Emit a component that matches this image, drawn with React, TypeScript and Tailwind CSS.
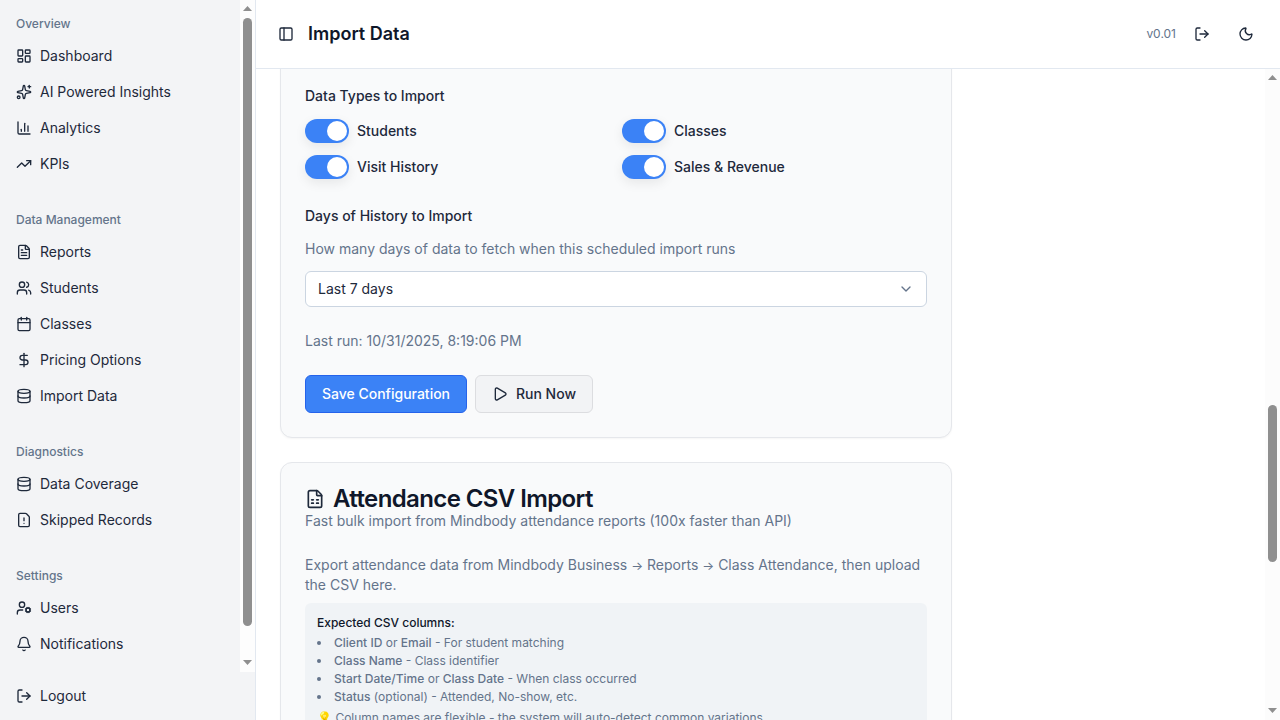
import React, { useEffect, useRef } from 'react';
import {
  LayoutDashboard,
  Sparkles,
  ChartColumn,
  TrendingUp,
  FileText,
  Users,
  Calendar,
  DollarSign,
  Database,
  FileWarning,
  UserCog,
  Bell,
  LogOut,
  PanelLeft,
  Moon,
  Play,
  ChevronDown,
  FileSpreadsheet,
} from 'lucide-react';

const sections = [
  {
    title: 'Overview',
    items: [
      { label: 'Dashboard', icon: LayoutDashboard },
      { label: 'AI Powered Insights', icon: Sparkles },
      { label: 'Analytics', icon: ChartColumn },
      { label: 'KPIs', icon: TrendingUp },
    ],
  },
  {
    title: 'Data Management',
    items: [
      { label: 'Reports', icon: FileText },
      { label: 'Students', icon: Users },
      { label: 'Classes', icon: Calendar },
      { label: 'Pricing Options', icon: DollarSign },
      { label: 'Import Data', icon: Database },
    ],
  },
  {
    title: 'Diagnostics',
    items: [
      { label: 'Data Coverage', icon: Database },
      { label: 'Skipped Records', icon: FileWarning },
    ],
  },
  {
    title: 'Settings',
    items: [
      { label: 'Users', icon: UserCog },
      { label: 'Notifications', icon: Bell },
    ],
  },
];

const Toggle = ({ label }: { label: string }) => (
  <div className="flex items-center gap-2">
    <div className="flex h-6 w-11 items-center justify-end rounded-full bg-[#3b82f6] px-0.5 shadow-[0_4px_12px_rgba(0,0,0,0.08)]">
      <div className="h-5 w-5 rounded-full bg-white" />
    </div>
    <span className="text-sm font-medium text-[#1e293b]">{label}</span>
  </div>
);

const ScrollArrow = ({ down }: { down?: boolean }) => (
  <svg width="9" height="5" viewBox="0 0 9 5" className="fill-[#8f8f8f]">
    <polygon points={down ? '0,0 9,0 4.5,5' : '0,5 9,5 4.5,0'} />
  </svg>
);

const Sidebar = () => (
  <aside className="flex h-full w-64 shrink-0 flex-col border-r border-[#e2e8f0] bg-[#f3f4f6]">
    <div className="relative flex-1 overflow-hidden">
      <nav className="pt-4">
        {sections.map((s, i) => (
          <div key={s.title} className={i > 0 ? 'mt-[30px]' : ''}>
            <div className="mb-1.5 px-4 text-xs leading-4 font-medium text-[#64748b]">{s.title}</div>
            {s.items.map((item) => (
              <div key={item.label} className="flex h-9 items-center gap-2 px-4 text-sm text-[#1e293b]">
                <item.icon size={16} />
                <span>{item.label}</span>
              </div>
            ))}
          </div>
        ))}
      </nav>
      <div className="absolute inset-y-0 right-0 flex w-[15px] flex-col items-center bg-[#fdfdfd] pt-[6px]">
        <ScrollArrow />
        <div className="mt-[7px] h-[608px] w-[9px] rounded-full bg-[#8f8f8f]" />
        <div className="mt-[34px]">
          <ScrollArrow down />
        </div>
      </div>
    </div>
    <div className="flex h-12 shrink-0 items-center gap-2 px-4 text-sm text-[#1e293b]">
      <LogOut size={16} />
      <span>Logout</span>
    </div>
  </aside>
);

const Header = () => (
  <header className="flex h-[69px] shrink-0 items-center border-b border-[#e2e8f0] bg-white pr-4 pl-[22px]">
    <PanelLeft size={16} className="text-[#1e293b]" />
    <h1 className="ml-3.5 text-lg font-semibold text-[#0f172a]">Import Data</h1>
    <div className="ml-auto flex items-center">
      <span className="text-xs text-[#64748b]">v0.01</span>
      <div className="ml-2 flex h-9 w-9 items-center justify-center text-[#1e293b]">
        <LogOut size={16} />
      </div>
      <div className="ml-2 flex h-9 w-9 items-center justify-center text-[#1e293b]">
        <Moon size={16} />
      </div>
    </div>
  </header>
);

const App = () => {
  const scroller = useRef<HTMLElement>(null);

  useEffect(() => {
    // the page is photographed scrolled about halfway down
    if (scroller.current) scroller.current.scrollTop = 1331;
  }, []);

  return (
    <div className="flex h-screen w-full overflow-hidden bg-white font-['Inter',sans-serif]">
      <Sidebar />
      <div className="flex min-w-0 flex-1 flex-col">
        <Header />
        <div className="relative min-h-0 flex-1">
          <main ref={scroller} className="h-full overflow-hidden px-6">
            <div className="max-w-2xl">
              {/* Scheduled import card: only its lower half is in view */}
              <section className="rounded-xl border border-[#e5e7eb] bg-[#f9fafb] px-6 pb-6 shadow-[0_1px_2px_rgba(0,0,0,0.04)]">
                <div className="h-[1347px]" />
                <h3 className="text-sm leading-5 font-medium text-[#1e293b]">Data Types to Import</h3>
                <div className="mt-[13px] grid grid-cols-2 gap-3">
                  <Toggle label="Students" />
                  <Toggle label="Classes" />
                  <Toggle label="Visit History" />
                  <Toggle label="Sales & Revenue" />
                </div>
                <h3 className="mt-[27px] text-sm leading-5 font-medium text-[#1e293b]">Days of History to Import</h3>
                <p className="mt-[13px] text-sm leading-5 text-[#64748b]">
                  How many days of data to fetch when this scheduled import runs
                </p>
                <div className="mt-3 flex h-9 items-center justify-between rounded-md border border-[#cbd5e1] bg-white px-3 text-sm text-[#1e293b]">
                  <span>Last 7 days</span>
                  <ChevronDown size={16} className="text-[#64748b]" />
                </div>
                <p className="mt-6 text-sm leading-5 text-[#64748b]">Last run: 10/31/2025, 8:19:06 PM</p>
                <div className="mt-6 flex gap-2">
                  <button className="h-[38px] w-[162px] rounded-md border border-[#2563eb] bg-[#3b82f6] text-sm font-medium text-white">
                    Save Configuration
                  </button>
                  <button className="flex h-[38px] w-[118px] items-center justify-center gap-2 rounded-md border border-[#dcdde0] bg-[#f2f3f5] text-sm font-medium text-[#1e293b]">
                    <Play size={16} />
                    Run Now
                  </button>
                </div>
              </section>

              <section className="mt-6 h-[1000px] rounded-xl border border-[#e5e7eb] bg-[#f9fafb] px-6 pt-6 shadow-[0_1px_2px_rgba(0,0,0,0.04)]">
                <h2 className="flex items-center gap-2 text-2xl leading-6 font-semibold tracking-tight text-[#0f172a]">
                  <FileSpreadsheet size={20} className="text-[#1e293b]" />
                  Attendance CSV Import
                </h2>
                <p className="text-sm leading-5 text-[#64748b]">Fast bulk import from Mindbody attendance reports (100x faster than API)</p>
                <p className="mt-6 text-sm leading-5 text-[#64748b]">
                  Export attendance data from Mindbody Business <span className="text-[12.5px] leading-none">→</span> Reports <span className="text-[12.5px] leading-none">→</span> Class Attendance, then upload the CSV here.
                </p>
                <div className="mt-2 rounded-md bg-[#f0f3f6] p-3 text-xs leading-[18px] text-[#64748b]">
                  <p className="mb-[3px] leading-4 font-medium text-[#0f172a]">Expected CSV columns:</p>
                  <ul className="list-inside list-disc">
                    <li><strong className="font-medium">Client ID</strong> or <strong className="font-medium">Email</strong> - For student matching</li>
                    <li><strong className="font-medium">Class Name</strong> - Class identifier</li>
                    <li><strong className="font-medium">Start Date/Time</strong> or <strong className="font-medium">Class Date</strong> - When class occurred</li>
                    <li><strong className="font-medium">Status</strong> (optional) - Attended, No-show, etc.</li>
                  </ul>
                  <p className="mt-[3px]">💡 Column names are flexible - the system will auto-detect common variations</p>
                </div>
              </section>
            </div>
          </main>
          <div className="absolute inset-y-0 right-0 flex w-[15px] flex-col items-center bg-[#fcfcfc] pt-[6px]">
            <ScrollArrow />
            <div className="mt-[325px] h-[157px] w-[9px] rounded-full bg-[#8f8f8f]" />
            <div className="mt-[146px]">
              <ScrollArrow down />
            </div>
          </div>
        </div>
      </div>
    </div>
  );
};

export default App;
